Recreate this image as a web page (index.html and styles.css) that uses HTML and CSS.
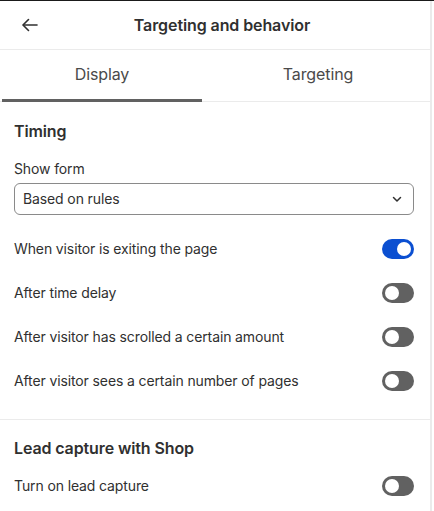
FILE: index.html
```html
<!DOCTYPE html>
<html lang="en">
<head>
	<meta charset="UTF-8">
	<meta name="viewport" content="width=device-width, initial-scale=1.0">
	<title>Targeting and behavior</title>
	<link rel="stylesheet" href="styles.css">
</head>
<body>
	<div class="panel">
		<div class="header">
			<button class="back" aria-label="Back">
				<svg width="20" height="20" viewBox="0 0 20 20" fill="none" stroke="#303030" stroke-width="1.6" stroke-linecap="round" stroke-linejoin="round">
					<path d="M17 10H3.5"/>
					<path d="M8.5 4.5L3 10l5.5 5.5"/>
				</svg>
			</button>
			<h1>Targeting and behavior</h1>
		</div>
		<div class="tabs">
			<div class="tab active">Display</div>
			<div class="tab">Targeting</div>
		</div>
		<div class="section">
			<h2>Timing</h2>
			<div class="field">
				<label for="show">Show form</label>
				<div class="select">
					<span>Based on rules</span>
					<svg width="12" height="12" viewBox="0 0 12 12" fill="none" stroke="#303030" stroke-width="1.5" stroke-linecap="round" stroke-linejoin="round">
						<path d="M2.5 4.5L6 8l3.5-3.5"/>
					</svg>
				</div>
			</div>
			<div class="toggle-list">
				<div class="row"><span>When visitor is exiting the page</span><span class="toggle on"></span></div>
				<div class="row"><span>After time delay</span><span class="toggle"></span></div>
				<div class="row"><span>After visitor has scrolled a certain amount</span><span class="toggle"></span></div>
				<div class="row"><span>After visitor sees a certain number of pages</span><span class="toggle"></span></div>
			</div>
		</div>
		<div class="section last">
			<h2>Lead capture with Shop</h2>
			<div class="toggle-list">
				<div class="row"><span>Turn on lead capture</span><span class="toggle"></span></div>
			</div>
		</div>
	</div>
</body>
</html>
```

FILE: styles.css
```css
*{ box-sizing: border-box;}
body{
	margin: 0; background: #fff; border-top: 1px solid #1a1a1a;
	font-family: Inter, "Noto Sans", sans-serif; color: #303030;
	font-size: 14px; line-height: 20px; letter-spacing: -0.12px;
}
.panel{ width: 432px; min-height: 510px; border-right: 2px solid #ebebeb;}
.header{
	position: relative; height: 49px; border-bottom: 1px solid #ebebeb;
	display: flex; align-items: center; justify-content: center;
}
.header h1{ margin: 0; font-size: 16px; font-weight: 600; line-height: 20px; color: #303030; padding-left: 14px; letter-spacing: -0.1px;}
.back{
	position: absolute; left: 20px; top: 14px;
	border: 0; background: none; padding: 0; width: 20px; height: 20px;
}
.tabs{
	display: grid; grid-template-columns: 200px 1fr;
	padding-left: 2px; height: 52px; border-bottom: 1px solid #ebebeb;
}
.tab{
	display: flex; align-items: center; justify-content: center;
	font-size: 16px; color: #4a4a4a; padding-bottom: 4px;
}
.tab:last-child{ padding-left: 4px;}
.tab.active{ border-bottom: 3px solid #616161; padding-bottom: 2px; margin-bottom: -1px;}
.section{ padding: 19px 16px 28px 14px; border-bottom: 1px solid #ebebeb;}
.section.last{ padding-top: 18px; border-bottom: 0;}
.section h2{ margin: 0 0 18px; font-size: 16px; font-weight: 600; line-height: 20px;}
.field{ margin-bottom: 24px;}
.field label{ display: block; margin-bottom: 4px;}
.select{
	display: flex; align-items: center; justify-content: space-between;
	height: 32px; padding: 0 10px 0 8px;
	border: 1px solid #8a8a8a; border-radius: 6px;
}
.toggle-list{ display: flex; flex-direction: column; gap: 24px;}
.row{ display: flex; align-items: center; justify-content: space-between; height: 20px;}
.toggle{
	position: relative; width: 32px; height: 20px; border-radius: 10px; background: #616161;
}
.toggle::after{
	content: ""; position: absolute; top: 3px; left: 3px;
	width: 14px; height: 14px; border-radius: 50%; background: #fff;
}
.toggle.on{ background: #0b4fd1;}
.toggle.on::after{ left: 15px;}
```
